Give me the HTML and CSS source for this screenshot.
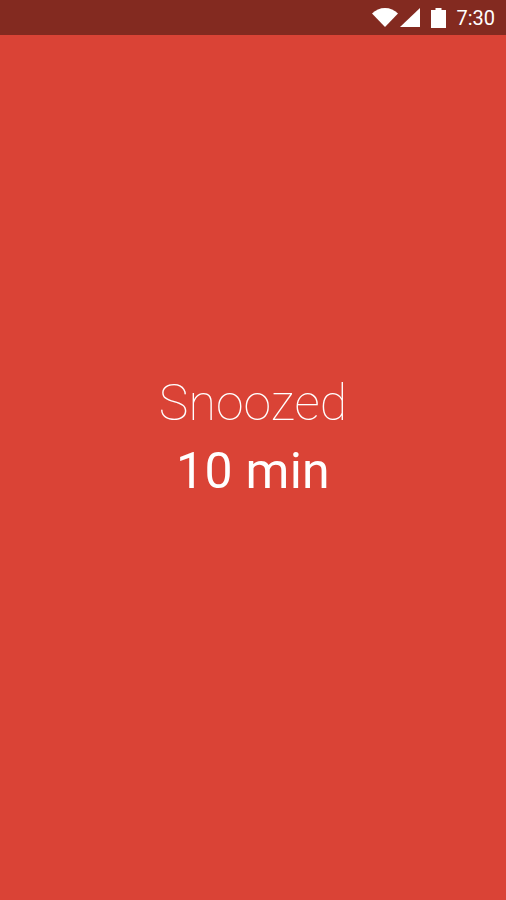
FILE: index.html
```html
<!DOCTYPE html>
<html lang="en">
<head>
    <meta charset="UTF-8">
    <meta name="viewport" content="width=device-width, initial-scale=1.0">
    <title>Snoozed</title>
    <link rel="stylesheet" href="styles.css">
</head>
<body>
    <div class="status-bar">
        <svg class="icon-wifi" width="26" height="19" viewBox="0 0 26 19"><path d="M0 5.500C3.500 2 8 0 13 0S22.500 2 26 5.500L13 19z" fill="#fff"/></svg>
        <svg class="icon-signal" width="20" height="19" viewBox="0 0 20 19"><path d="M0 19L20 0V19z" fill="#fff"/></svg>
        <svg class="icon-battery" width="15" height="20" viewBox="0 0 15 20"><path d="M4.500 0H10.500V2H15V20H0V2H4.500z" fill="#fff"/></svg>
        <span class="clock">7:30</span>
    </div>
    <div class="main">
        <div class="title">Snoozed</div>
        <div class="duration">10 min</div>
    </div>
</body>
</html>
```

FILE: styles.css
```css
html, body {
    margin: 0;
    height: 100%;
}
body {
    display: flex;
    flex-direction: column;
    height: 900px;
    overflow: hidden;
    background: #da4336;
    font-family: Roboto, "Liberation Sans", sans-serif;
    color: #fff;
}
.status-bar {
    height: 35px;
    flex: none;
    display: flex;
    align-items: center;
    justify-content: flex-end;
    padding-right: 11px;
    background: #832a20;
}
.icon-wifi { margin-right: 2px; }
.icon-signal { margin-right: 11px; }
.icon-battery { margin-right: 10px; }
.clock {
    font-size: 20px;
    line-height: 35px;
    margin-top: 2px;
}
.main {
    flex: 1;
    display: flex;
    flex-direction: column;
    align-items: center;
    padding-top: 338px;
}
.title {
    font-size: 50px;
    font-weight: 100;
    line-height: 60px;
    letter-spacing: 0.1px;
}
.duration {
    font-size: 50px;
    font-weight: 400;
    line-height: 60px;
    letter-spacing: 0.3px;
    margin-top: 8px;
}
```
